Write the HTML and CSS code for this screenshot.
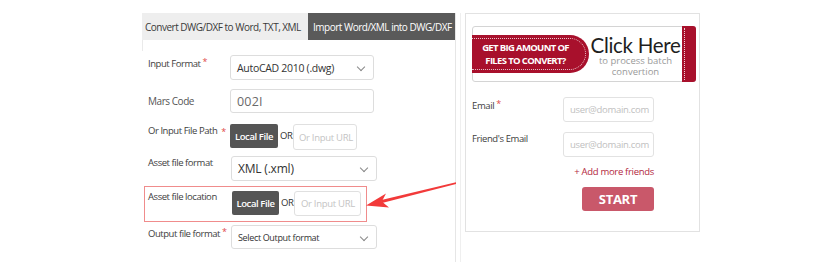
FILE: index.html
```html
<!DOCTYPE html>
<html lang="en">
<head>
    <meta charset="UTF-8">
    <title>DWG to Word Converter</title>
    <link rel="stylesheet" href="styles.css">
</head>
<body>
    <div class="page">
        <section class="converter">
            <nav class="tabs">
                <a href="#" class="tab">Convert DWG/DXF to Word, TXT, XML</a>
                <a href="#" class="tab active">Import Word/XML into DWG/DXF</a>
            </nav>
            <form class="convert-form">
                <div class="row row-format">
                    <label>Input Format <span class="req">*</span></label>
                    <div class="select wide">AutoCAD 2010 (.dwg)<span class="chev"></span></div>
                </div>
                <div class="row row-code">
                    <label>Mars Code</label>
                    <div class="text-input code">002I</div>
                </div>
                <div class="row row-path">
                    <label>Or Input File Path <span class="req">*</span></label>
                    <div class="file-pick">
                        <button type="button" class="local-btn">Local File</button>
                        <span class="or">OR</span>
                        <div class="url-input">Or Input URL</div>
                    </div>
                </div>
                <div class="row row-asset">
                    <label>Asset file format</label>
                    <div class="select wider xml">XML (.xml)<span class="chev"></span></div>
                </div>
                <div class="row row-location">
                    <label>Asset file location</label>
                    <div class="file-pick">
                        <button type="button" class="local-btn">Local File</button>
                        <span class="or">OR</span>
                        <div class="url-input long">Or Input URL</div>
                    </div>
                </div>
                <div class="row row-output">
                    <label>Output file format <span class="req">*</span></label>
                    <div class="select wider small">Select Output format<span class="chev"></span></div>
                </div>
            </form>
        </section>
        <div class="divider"></div>
        <aside class="batch">
            <div class="banner">
                <div class="tag">GET BIG AMOUNT OF<br>FILES TO CONVERT?</div>
                <div class="click">
                    <div class="click-title">Click Here</div>
                    <div class="click-sub">to process batch</div>
                    <div class="click-sub">convertion</div>
                </div>
                <div class="strip"></div>
            </div>
            <div class="b-row email">
                <label>Email <span class="req">*</span></label>
                <div class="mail-input">user@domain.com</div>
            </div>
            <div class="b-row friend">
                <label>Friend's Email</label>
                <div class="mail-input">user@domain.com</div>
            </div>
            <div class="actions">
                <a href="#" class="add-friends">+ Add more friends</a>
                <button type="button" class="start-btn">START</button>
            </div>
        </aside>
    </div>

    <svg class="arrow" width="840" height="262" viewBox="0 0 840 262">
        <polygon points="456,182.3 456,183.9 382,203 381.4,200" fill="#f23a3a"/>
        <polygon points="366,205.5 386,193.6 381.8,201.6 389,207.5" fill="#f23a3a"/>
    </svg>
</body>
</html>
```

FILE: styles.css
```css
* {
    margin: 0;
    padding: 0;
    box-sizing: border-box;
}

body {
    width: 840px;
    height: 262px;
    overflow: hidden;
    background: #ffffff;
    font-family: 'Open Sans', 'Noto Sans', sans-serif;
    color: #444;
    position: relative;
}

.page {
    display: flex;
    padding: 13px 0 0 142px;
}

/* left panel */
.converter {
    width: 314px;
    height: 249px;
    border-right: 1px solid #e6e6e6;
}

.tabs {
    display: flex;
    height: 27px;
}

.tab {
    display: flex;
    align-items: center;
    text-decoration: none;
    font-size: 10px;
    letter-spacing: -0.5px;
    white-space: nowrap;
}

.tab:first-child {
    width: 166px;
    padding-left: 3px;
    background: #eeeeee;
    color: #3a3a3a;
}

.tab.active {
    flex-grow: 1;
    padding-left: 5px;
    background: #5a5a5a;
    color: #ffffff;
}

.convert-form {
    padding: 15px 0 0 5px;
    border-left: 1px solid #eeeeee;
    border-image: linear-gradient(#eaeaea 12px, transparent 12px) 1;
}

.row {
    display: flex;
    align-items: flex-start;
}

.row label {
    width: 82px;
    flex: none;
    font-size: 9.5px;
    letter-spacing: -0.45px;
    line-height: 14px;
    color: #3e3e3e;
    white-space: nowrap;
}

.req {
    color: #e04848;
    font-size: 9px;
    vertical-align: 2px;
}

.row-format { height: 25px; margin-bottom: 9px; }
.row-code { height: 24px; margin-bottom: 11px; align-items: center; }
.row-code label { color: #555; font-size: 10px; }
.row-path { height: 26px; margin-bottom: 5px; }
.row-path .req { margin-left: 2px; vertical-align: -1px; }
.row-asset { height: 25px; margin-bottom: 6px; padding-top: 1px; }
.row-output { height: 24px; }

.row-location {
    height: 36px;
    margin: 0 0 3px -4px;
    width: 223px;
    border: 1px solid #f08c8c;
    padding: 3px 0 0 3px;
}

.row-location label {
    width: 83px;
}

.row-location .file-pick {
    padding-top: 1px;
}

.select {
    position: relative;
    height: 25px;
    border: 1px solid #dddddd;
    border-radius: 3px;
    display: flex;
    align-items: center;
    padding-left: 6px;
    font-size: 10.5px;
    letter-spacing: -0.3px;
    color: #333;
    background: #fff;
}

.select.wide { width: 144px; }
.select.wider { width: 146px; margin-left: 1px; }
.select.xml { font-size: 12px; letter-spacing: -0.2px; }
.select.small { font-size: 9px; height: 24px; letter-spacing: -0.35px; }

.chev {
    position: absolute;
    right: 9px;
    top: 8px;
    width: 6px;
    height: 6px;
    border-right: 1.3px solid #888;
    border-bottom: 1.3px solid #888;
    transform: rotate(45deg);
}

.text-input {
    width: 144px;
    height: 24px;
    border: 1px solid #dddddd;
    border-radius: 3px;
    display: flex;
    align-items: center;
    padding-left: 6px;
}

.code {
    font-size: 12.5px;
    color: #6a6a6a;
    letter-spacing: 0.2px;
}

.file-pick {
    display: flex;
    align-items: flex-start;
}

.local-btn {
    width: 48px;
    height: 24px;
    border: none;
    border-radius: 2px;
    background: #555555;
    color: #ffffff;
    font-family: inherit;
    font-size: 9.5px;
    font-weight: 600;
    letter-spacing: -0.4px;
}

.row-location .local-btn {
    width: 47px;
    margin-left: 1px;
}

.or {
    width: 15px;
    padding-left: 2px;
    font-size: 9.5px;
    line-height: 24px;
    color: #333;
    letter-spacing: -0.3px;
}

.url-input {
    width: 64px;
    height: 26px;
    border: 1px solid #e0e0e0;
    border-radius: 3px;
    display: flex;
    align-items: center;
    padding-left: 5px;
    font-size: 9.5px;
    letter-spacing: -0.3px;
    color: #c4c4c4;
    white-space: nowrap;
}

.url-input.long {
    width: 67px;
    height: 25px;
    padding-left: 6px;
}

.divider {
    width: 1px;
    height: 249px;
    margin: 0 4px;
    background: #efefef;
}

/* right panel */
.batch {
    width: 235px;
    height: 219px;
    border: 1px solid #e2e2e2;
    padding: 12px 0 0 6px;
    display: flex;
    flex-direction: column;
}

.banner {
    width: 224px;
    height: 56px;
    border: 1px solid #d4d4d4;
    border-radius: 3px;
    display: flex;
    align-items: center;
}

.tag {
    position: relative;
    flex: none;
    width: 117px;
    height: 38px;
    margin-left: -1px;
    padding-right: 10px;
    background: #a8102c;
    border-radius: 0 19px 19px 0;
    color: #ffffff;
    font-size: 9.5px;
    font-weight: 700;
    line-height: 13px;
    letter-spacing: -0.65px;
    display: flex;
    align-items: center;
    justify-content: center;
    text-align: center;
}

.tag::before {
    content: '';
    position: absolute;
    top: 3px;
    bottom: 3px;
    left: 0;
    right: 3px;
    border: 1px dotted rgba(255, 255, 255, 0.75);
    border-left: none;
    border-radius: 0 16px 16px 0;
}

.click {
    flex-grow: 1;
    text-align: center;
    padding-top: 3px;
    white-space: nowrap;
}

.click-title {
    font-family: 'Lato', 'Open Sans', sans-serif;
    font-size: 20.5px;
    line-height: 20px;
    color: #1e1e1e;
    letter-spacing: -0.3px;
}

.click-sub {
    font-size: 9.5px;
    line-height: 11px;
    color: #9a9a9a;
    letter-spacing: 0;
}

.strip {
    position: relative;
    flex: none;
    align-self: stretch;
    width: 14px;
    margin: -1px -1px -1px 0;
    background: #a8102c;
    border-radius: 0 3px 3px 0;
}

.strip::before {
    content: '';
    position: absolute;
    top: 2px;
    bottom: 2px;
    left: 2px;
    border-left: 1px dotted rgba(255, 255, 255, 0.8);
}

.b-row {
    display: flex;
    align-items: flex-start;
}

.b-row label {
    width: 91px;
    flex: none;
    font-size: 9.5px;
    letter-spacing: -0.4px;
    color: #3e3e3e;
}

.email {
    margin-top: 15px;
}

.friend {
    margin-top: 10px;
}

.mail-input {
    width: 91px;
    height: 25px;
    border: 1px solid #e2e2e2;
    border-radius: 3px;
    display: flex;
    align-items: center;
    padding-left: 6px;
    font-size: 9.5px;
    letter-spacing: -0.3px;
    color: #c0c0c0;
}

.actions {
    width: 182px;
    display: flex;
    flex-direction: column;
    align-items: flex-end;
}

.add-friends {
    margin-top: 8px;
    font-size: 9.5px;
    letter-spacing: -0.3px;
    color: #b3283e;
    text-decoration: none;
}

.start-btn {
    width: 72px;
    height: 24px;
    margin-top: 9px;
    border: none;
    border-radius: 3px;
    background: #c9586a;
    color: #ffffff;
    font-family: inherit;
    font-size: 13px;
    font-weight: 700;
    letter-spacing: -0.3px;
}

/* annotation */
.arrow {
    position: absolute;
    left: 0;
    top: 0;
    pointer-events: none;
}
```
